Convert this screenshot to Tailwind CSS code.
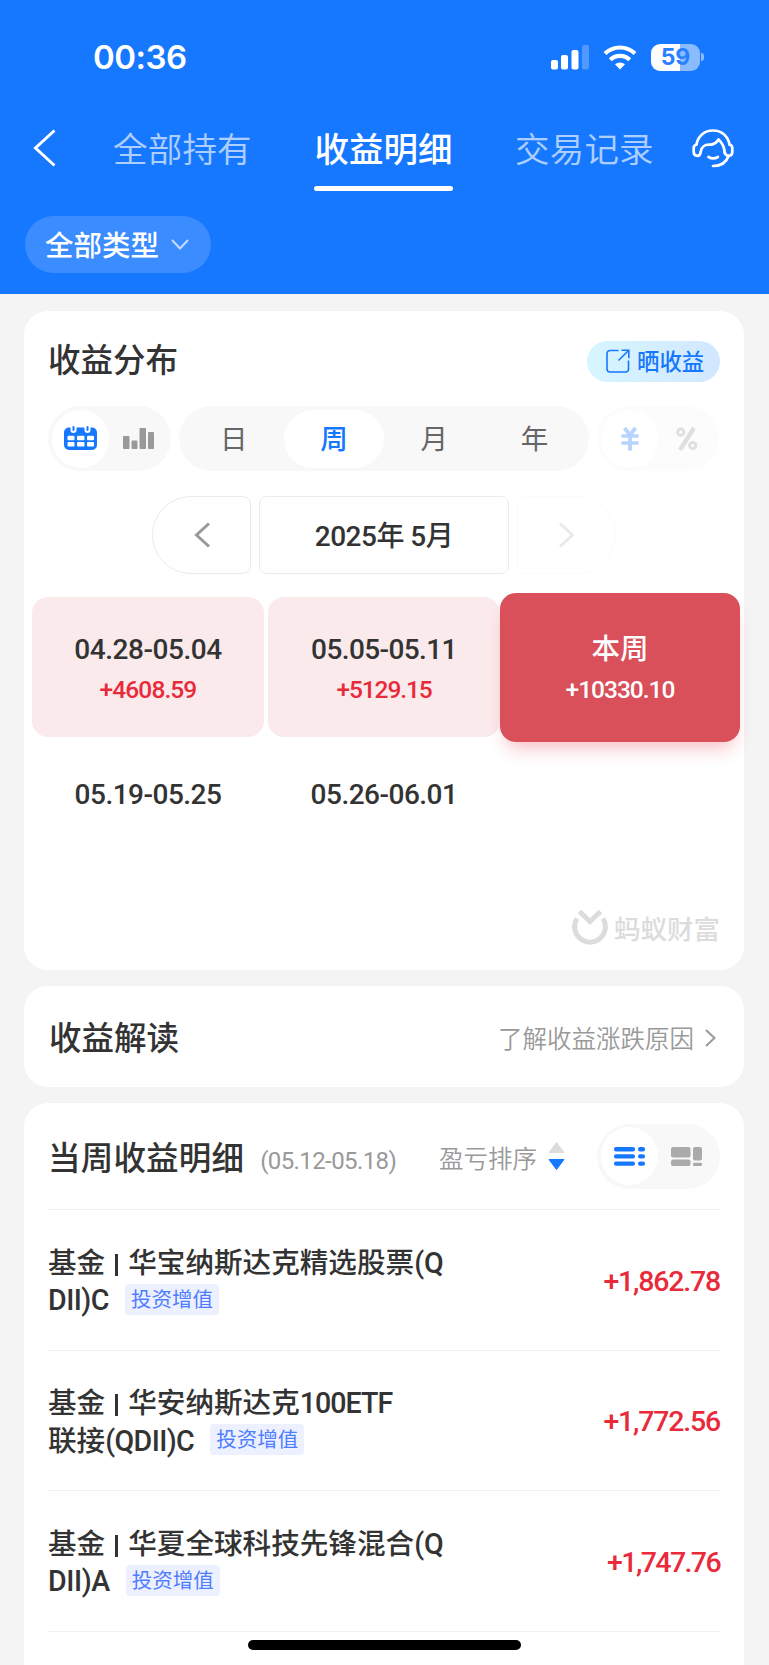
<!DOCTYPE html>
<html lang="zh-CN">
<head>
<meta charset="utf-8">
<title>收益明细</title>
<script src="https://cdn.jsdelivr.net/npm/@tailwindcss/browser@4"></script>
</head>
<body class="relative h-[1665px] w-[769px] overflow-hidden bg-[#f4f4f4] font-[Roboto,'Noto_Sans_CJK_SC',sans-serif] text-[#333]">

<header class="h-[294px] bg-[#1677ff] text-white">
  <div class="flex h-[114px] items-center pl-[93px] pr-[65px]">
    <div class="pt-px font-[Inter,sans-serif] text-[33px] font-semibold tracking-[-0.500px] leading-none">00:36</div>
    <div class="ml-auto flex items-center">
      <svg class="block" width="38" height="25" viewBox="0 0 38 25" fill="#fff"><rect x="0" y="15" width="7" height="9.500" rx="2"/><rect x="10" y="10" width="7" height="14.500" rx="2"/><rect x="20.500" y="5" width="7" height="19.500" rx="2"/><rect x="31" y="0" width="7" height="24.500" rx="2" opacity=".25"/></svg>
      <svg class="ml-[14px] block" width="34" height="25" viewBox="0 0 34 25" fill="none" stroke="#fff" stroke-width="4.200"><path d="M2 8.600A21.500 21.500 0 0 1 32 8.600"/><path d="M7.300 14.800A14 14 0 0 1 26.700 14.800"/><path d="M17 24.500l-5-5.200a7.500 7.500 0 0 1 10 0z" fill="#fff" stroke="none"/></svg>
      <div class="ml-[14px] flex h-[27px] w-[49px] items-center justify-center rounded-[9px] bg-linear-to-r from-white from-59% to-[#8bbbff] to-59% pt-px font-[Inter,sans-serif] text-[23px] leading-none font-bold text-[#2a7fff]">59</div>
      <div class="ml-[1px] h-[8px] w-[3px] rounded-r-full bg-[#8bbbff]"></div>
    </div>
  </div>
  <nav class="flex h-[78px] pl-[33px] text-[34.500px] leading-[72px]">
    <svg class="mt-[15px] block" width="23" height="38" viewBox="0 0 23 38" fill="none" stroke="#fff" stroke-width="3"><path d="M21.500 1.500L2.500 19l19 17.500"/></svg>
    <div class="ml-[57px] w-[140px] font-[350] tracking-[0.200px] text-white/65">全部持有</div>
    <div class="ml-[61px] w-[139px] text-center font-medium">收益明细<div class="h-[5px] rounded-full bg-white"></div></div>
    <div class="ml-[62px] w-[140px] font-[350] tracking-[0.200px] text-white/65">交易记录</div>
    <svg class="ml-[37px] mt-[14px] block" width="42" height="40" viewBox="0 0 42 40" fill="none" stroke="#fff" stroke-width="2.700" stroke-linecap="round" stroke-linejoin="round"><path d="M4.500 16.500C6 8 12.500 2.500 21 2.500S36 8 37.500 16.500"/><path d="M4.500 16.500C2.500 17 1.700 18 1.700 20v4c0 2.400 1.500 3.800 3.600 3.800 2.500 0 3.200-1.600 3.500-4.300C9.300 18.800 13 16.400 17.500 16.600c4.500.2 7-1.800 9-5.100 4 3.500 6 8 6.200 13.500"/><path d="M37.500 16.500c2 .5 2.800 1.500 2.800 3.500v4c0 2.400-1.500 3.800-3.600 3.800-2.500 0-3.700-1-4-3.600"/><path d="M36.500 28c-2 6-7.500 10-15.500 10"/><path d="M16.500 29c2.700 1.600 6.700 1.600 9.400 0"/></svg>
  </nav>
  <div class="ml-[25px] mt-[24px] flex h-[57px] w-[186px] items-center rounded-full bg-white/16 pl-[20px] text-[28.500px] leading-[57px] font-medium"><span class="pt-[3px]">全部类型</span>
    <svg class="ml-[12px] block" width="18" height="11" viewBox="0 0 18 11" fill="none" stroke="#fff" stroke-opacity=".7" stroke-width="2"><path d="M1 1l8 8.500L17 1"/></svg>
  </div>
</header>

<main class="mr-[25px] ml-[24px] mt-[17px] flex flex-col gap-[16px]">
  <section class="h-[659px] rounded-[24px] bg-white">
    <div class="flex h-[95px] items-center px-[24px] pt-[4px]">
      <h2 class="text-[32.500px] leading-[48px] font-medium">收益分布</h2>
      <div class="ml-auto mb-[2px] flex h-[41px] w-[133px] items-center rounded-full bg-linear-to-r from-[#d6f6ff] to-[#d2e7ff] pl-[19px] mt-[3px] text-[22.400px] leading-[41px] font-medium text-[#1677ff]">
        <svg class="mr-[7px] block" width="24" height="24" viewBox="0 0 24 24" fill="none" stroke="#1677ff" stroke-width="1.600"><path d="M12.500 1.500H4a3 3 0 0 0-3 3V20a3 3 0 0 0 3 3h15.500a3 3 0 0 0 3-3v-8.500"/><path d="M12.500 11.500L22.500 1.500M15.500 1.200h7.300v8"/></svg><span class="pt-[3px]">晒收益</span>
      </div>
    </div>

    <div class="flex h-[65px] gap-[8px] px-[24px] text-[27.500px] leading-[60px]">
      <div class="flex w-[123px] items-center rounded-full bg-[#f8f8f8] pl-[4px]">
        <div class="flex h-[58px] w-[57px] items-center justify-center rounded-full bg-white">
          <svg class="block" width="33" height="25" viewBox="0 0 33 25"><path fill="#1677ff" d="M5 1.500h23a5 5 0 0 1 5 5V19a5 5 0 0 1-5 5H5a5 5 0 0 1-5-5V6.500a5 5 0 0 1 5-5z"/><g fill="#fff"><rect x="3.500" y="9.700" width="7" height="4.500" rx="1"/><rect x="13" y="9.700" width="7.500" height="4.500" rx="1"/><rect x="23" y="9.700" width="7" height="4.500" rx="1"/><rect x="3.500" y="16" width="7" height="4.500" rx="1"/><rect x="13" y="16" width="7.500" height="4.500" rx="1"/><rect x="23" y="16" width="7" height="4.500" rx="1"/><path d="M6.500 0h6v4a3 3 0 0 1-6 0zM20.500 0h6v4a3 3 0 0 1-6 0z"/></g><path stroke="#1677ff" stroke-width="2" stroke-linecap="round" d="M9.500 1v3M23.500 1v3"/></svg>
        </div>
        <svg class="ml-[14px] block" width="31" height="21" viewBox="0 0 31 21" fill="#999"><rect y="8" width="6.500" height="13" rx="1"/><rect x="8.500" y="12.500" width="6" height="8.500" rx="1"/><rect x="16.500" width="6.500" height="21" rx="1"/><rect x="25" y="4" width="6" height="17" rx="1"/></svg>
      </div>
      <div class="flex w-[410px] items-center rounded-full bg-[#f8f8f8] px-[4.500px] text-center text-[#666]">
        <div class="h-[58px] flex-1">日</div>
        <div class="h-[58px] flex-1 rounded-full bg-white font-medium text-[#1677ff]">周</div>
        <div class="h-[58px] flex-1">月</div>
        <div class="h-[58px] flex-1">年</div>
      </div>
      <div class="flex w-[122px] items-center rounded-full bg-[#f8f8f8] pl-[4px] opacity-30">
        <div class="flex h-[58px] w-[57px] items-center justify-center rounded-full bg-white">
          <svg class="block" width="18" height="24" viewBox="0 0 18 24" fill="none" stroke="#1677ff" stroke-width="4"><path d="M3.500 1L9 8l5.500-7M9 7v16.500" /><path d="M.5 9h17M.5 16h17" stroke-width="3.600"/></svg>
        </div>
        <svg class="ml-[18px] block" width="22" height="24" viewBox="0 0 22 24" fill="none" stroke="#999" stroke-width="2.800"><circle cx="4.800" cy="5.200" r="3.200"/><circle cx="16.700" cy="18.500" r="3.200"/><path d="M17.800 1L4 23" stroke-width="4.400"/></svg>
      </div>
    </div>

    <div class="mt-[25px] flex h-[78px] justify-center gap-[8px]">
      <div class="flex w-[99px] items-center justify-center rounded-l-[39px] rounded-r-[8px] border border-[#ebebeb]">
        <svg class="block" width="16" height="26" viewBox="0 0 16 26" fill="none" stroke="#999" stroke-width="3"><path d="M15 1.500L2.500 13 15 24.500"/></svg>
      </div>
      <div class="flex w-[250px] items-center justify-center rounded-[8px] border border-[#ebebeb] pt-[4px] text-[28px] leading-[40px] font-medium tracking-[-0.500px]">2025年&nbsp;5月</div>
      <div class="flex w-[99px] items-center justify-center rounded-l-[8px] rounded-r-[39px] border border-[#ebebeb] opacity-20">
        <svg class="block" width="16" height="26" viewBox="0 0 16 26" fill="none" stroke="#999" stroke-width="3"><path d="M1 1.500L13.500 13 1 24.500"/></svg>
      </div>
    </div>

    <div class="mx-[8px] mt-[23px] grid grid-cols-3 gap-x-[4px] gap-y-[5px] text-center font-medium">
      <div class="h-[140px] rounded-[16px] bg-[#fbeaec] pt-[33px]">
        <div class="text-[28px] leading-[40px] tracking-[-0.450px]">04.28-05.04</div>
        <div class="text-[24.500px] leading-[40px] tracking-[-0.900px] text-[#e92a3b]">+4608.59</div>
      </div>
      <div class="h-[140px] rounded-[16px] bg-[#fbeaec] pt-[33px]">
        <div class="text-[28px] leading-[40px] tracking-[-0.600px]">05.05-05.11</div>
        <div class="text-[24.500px] leading-[40px] tracking-[-1.100px] text-[#e92a3b]">+5129.15</div>
      </div>
      <div class="-mx-[4px] -my-[4.500px] h-[149px] rounded-[16px] bg-[#d94f5a] pt-[37.500px] text-white shadow-[0_12px_18px_-6px_rgba(233,42,59,0.3)]">
        <div class="text-[28.500px] leading-[40px]">本周</div>
        <div class="text-[24.500px] leading-[40px] tracking-[-1px]">+10330.10</div>
      </div>
      <div class="h-[140px] pt-[33px] text-[28px] leading-[40px] tracking-[-0.500px]">05.19-05.25</div>
      <div class="h-[140px] pt-[33px] text-[28px] leading-[40px] tracking-[-0.500px]">05.26-06.01</div>
    </div>

    <div class="mr-[24px] mt-[26px] flex items-center justify-end text-[26.500px] leading-[37px] font-medium text-[#dcdcdc]">
      <svg class="mr-[6px] block" width="36" height="37" viewBox="0 0 36 37" fill="none" stroke="#dcdcdc"><path stroke-width="5" d="M5 8.500a15.400 15.400 0 1 0 26 0"/><path stroke-width="5" d="M7.500 1.500L18 11.500 28.500 1.500"/></svg><span class="pt-[3px]">蚂蚁财富</span>
    </div>
  </section>

  <section class="flex h-[101px] items-center rounded-[24px] bg-white pl-[25px] pr-[28px]">
    <h2 class="pt-[5px] text-[32.500px] leading-[48px] font-medium">收益解读</h2>
    <div class="ml-auto flex items-center text-[24.500px] leading-[40px] font-[350] text-[#999]"><span class="pt-[6px]">了解收益涨跌原因</span>
      <svg class="ml-[11px] mt-[3px] block" width="11" height="18" viewBox="0 0 11 18" fill="none" stroke="#999" stroke-width="2"><path d="M1 1l8.500 8L1 17"/></svg>
    </div>
  </section>

  <section class="h-[600px] rounded-t-[24px] bg-white px-[24px]">
    <div class="flex h-[107px] items-center border-b border-[#f1f1f1]">
      <h2 class="pt-[5px] text-[32.500px] leading-[48px] font-medium tracking-[0.200px]">当周收益明细</h2>
      <div class="ml-[16px] mt-[9px] text-[24px] leading-[40px] tracking-[-0.600px] text-[#999]">(05.12-05.18)</div>
      <div class="ml-auto flex items-center text-[24.500px] leading-[40px] font-[350] text-[#999]"><span class="pt-[7px]">盈亏排序</span>
        <svg class="ml-[11px] block" width="17" height="30" viewBox="0 0 17 30"><path fill="#dcdcdc" stroke="#dcdcdc" stroke-linejoin="round" d="M8.500 1.500L16 11.500H1z"/><path fill="#1677ff" stroke="#1677ff" stroke-linejoin="round" d="M8.500 28.500L16 18.500H1z"/></svg>
      </div>
      <div class="ml-[32px] flex h-[65px] w-[123px] items-center rounded-full bg-[#f8f8f8] pl-[4px]">
        <div class="flex h-[58px] w-[57px] items-center justify-center rounded-full bg-white">
          <svg class="block" width="31" height="19" viewBox="0 0 31 19" fill="#1677ff"><rect width="21" height="4.400" rx="2"/><rect y="7.200" width="21" height="4.400" rx="2"/><rect y="14.400" width="21" height="4.400" rx="2"/><rect x="24" width="7" height="4.400" rx="2"/><rect x="24" y="7.200" width="7" height="4.400" rx="2"/><rect x="24" y="14.400" width="7" height="4.400" rx="2"/></svg>
        </div>
        <svg class="ml-[13px] block" width="31" height="19" viewBox="0 0 31 19" fill="#aaa"><rect width="19.500" height="10.500" rx="2"/><rect y="12.500" width="19.500" height="6.500" rx="2"/><rect x="22" width="9" height="13.500" rx="2"/><rect x="22" y="15.700" width="9" height="3.300" rx="1.300"/></svg>
      </div>
    </div>

    <div class="flex h-[140.500px] items-center border-b border-[#f1f1f1] pt-[5px]">
      <div class="text-[28.600px] leading-[37.500px] font-medium whitespace-nowrap">
        <div>基金<span class="mx-[10px] inline-block h-[22px] w-[3px] bg-[#333] align-[-3px]"></span>华宝纳斯达克精选股票(Q</div>
        <div class="flex items-center"><span class="tracking-[-0.500px]">DII)C</span><span class="mb-[4px] ml-[16px] flex h-[31px] w-[94px] items-center justify-center rounded-[4px] bg-[#ecf0ff] pt-[3px] text-[20.500px] font-normal text-[#4f7dff]">投资增值</span></div>
      </div>
      <div class="ml-auto text-[28.500px] tracking-[-1.200px] font-medium text-[#e92a3b]">+1,862.78</div>
    </div>
    <div class="flex h-[140.500px] items-center border-b border-[#f1f1f1] pt-[5px]">
      <div class="text-[28.600px] leading-[37.500px] font-medium whitespace-nowrap">
        <div>基金<span class="mx-[10px] inline-block h-[22px] w-[3px] bg-[#333] align-[-3px]"></span>华安纳斯达克<span class="tracking-[-1px]">100ETF</span></div>
        <div class="flex items-center"><span>联接<span class="tracking-[-0.600px]">(QDII)C</span></span><span class="mb-[4px] ml-[16px] flex h-[31px] w-[94px] items-center justify-center rounded-[4px] bg-[#ecf0ff] pt-[3px] text-[20.500px] font-normal text-[#4f7dff]">投资增值</span></div>
      </div>
      <div class="ml-auto text-[28.500px] tracking-[-1.200px] font-medium text-[#e92a3b]">+1,772.56</div>
    </div>
    <div class="flex h-[140.500px] items-center border-b border-[#f1f1f1] pt-[5px]">
      <div class="text-[28.600px] leading-[37.500px] font-medium whitespace-nowrap">
        <div>基金<span class="mx-[10px] inline-block h-[22px] w-[3px] bg-[#333] align-[-3px]"></span>华夏全球科技先锋混合(Q</div>
        <div class="flex items-center"><span class="tracking-[-0.400px]">DII)A</span><span class="mb-[4px] ml-[16px] flex h-[31px] w-[94px] items-center justify-center rounded-[4px] bg-[#ecf0ff] pt-[3px] text-[20.500px] font-normal text-[#4f7dff]">投资增值</span></div>
      </div>
      <div class="ml-auto text-[28.500px] tracking-[-1.600px] font-medium text-[#e92a3b]">+1,747.76</div>
    </div>
  </section>
</main>

<div class="absolute bottom-[15px] left-[248px] h-[10px] w-[273px] rounded-full bg-black"></div>
</body>
</html>
